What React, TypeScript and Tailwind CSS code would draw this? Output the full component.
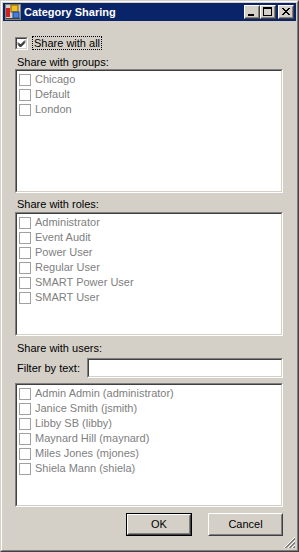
import React from 'react';

const groups = ['Chicago', 'Default', 'London'];
const roles = ['Administrator', 'Event Audit', 'Power User', 'Regular User', 'SMART Power User', 'SMART User'];
const users = [
  'Admin Admin (administrator)',
  'Janice Smith (jsmith)',
  'Libby SB (libby)',
  'Maynard Hill (maynard)',
  'Miles Jones (mjones)',
  'Shiela Mann (shiela)'
];

function Sunken({ className, children }: { className?: string; children?: React.ReactNode }) {
  return (
    <div className={`border border-t-[#808080] border-l-[#808080] border-b-white border-r-white ${className ?? ''}`}>
      <div className="h-full border border-t-[#404040] border-l-[#404040] border-b-[#d4d0c8] border-r-[#d4d0c8] bg-white">
        {children}
      </div>
    </div>
  );
}

function Raised({ className, children }: { className?: string; children?: React.ReactNode }) {
  return (
    <div className={`border border-t-white border-l-white border-b-[#404040] border-r-[#404040] bg-[#d4d0c8] ${className ?? ''}`}>
      <div className="flex h-full items-center justify-center border border-t-[#d4d0c8] border-l-[#d4d0c8] border-b-[#808080] border-r-[#808080]">
        {children}
      </div>
    </div>
  );
}

function ListBox({ items, className }: { items: string[]; className: string }) {
  return (
    <Sunken className={`w-[268px] ${className}`}>
      <div className="flex flex-col pt-[1px]">
        {items.map((item) => (
          <div key={item} className="flex h-[15px] items-center pl-[2px]">
            <div className="h-[12px] w-[12px] border border-[#a0a0a0] bg-white" />
            <span className="ml-[4px] text-[#808080]">{item}</span>
          </div>
        ))}
      </div>
    </Sunken>
  );
}

function AppIcon() {
  return (
    <svg width="16" height="16" viewBox="0 0 16 16">
      <rect x="0.5" y="0.5" width="15" height="15" fill="#d4d0c8" stroke="#808080" />
      <rect x="1" y="4" width="4" height="9" fill="#d02020" />
      <rect x="6" y="1" width="7" height="7" fill="#f0c020" stroke="#806000" />
      <rect x="8" y="8" width="6" height="6" fill="#4080e0" stroke="#204080" />
      <line x1="1" y1="14.5" x2="15" y2="14.5" stroke="#404040" />
    </svg>
  );
}

function CaptionButton({ kind }: { kind: 'min' | 'max' | 'close' }) {
  return (
    <Raised className="h-[14px] w-[16px]">
      <svg width="12" height="10" viewBox="0 0 12 10">
        {kind === 'min' && <rect x="2" y="7" width="6" height="2" fill="#000" />}
        {kind === 'max' && (
          <>
            <rect x="1.5" y="0.5" width="8" height="8" fill="none" stroke="#000" />
            <line x1="1" y1="1.5" x2="10" y2="1.5" stroke="#000" />
          </>
        )}
        {kind === 'close' && (
          <path d="M2 1 L9 8 M3 1 L10 8 M9 1 L2 8 M10 1 L3 8" stroke="#000" strokeWidth="1" />
        )}
      </svg>
    </Raised>
  );
}

export default function App() {
  return (
    <div
      className="h-[552px] w-[299px] border border-t-[#d4d0c8] border-l-[#d4d0c8] border-b-[#404040] border-r-[#404040] bg-[#d4d0c8] text-[11px] leading-[13px] text-black"
      style={{ fontFamily: '"Liberation Sans", Arial, sans-serif' }}
    >
      <div className="flex h-full flex-col border border-t-white border-l-white border-b-[#808080] border-r-[#808080] p-[1px]">
        {/* title bar */}
        <div className="flex h-[18px] shrink-0 items-center bg-[#0a246a] pl-[2px] pr-[2px]">
          <AppIcon />
          <span className="ml-[3px] text-[11px] font-bold text-white">Category Sharing</span>
          <div className="ml-auto flex items-center">
            <CaptionButton kind="min" />
            <CaptionButton kind="max" />
            <div className="w-[2px]" />
            <CaptionButton kind="close" />
          </div>
        </div>

        <div className="flex flex-1 flex-col pl-[12px]">
          {/* share with all */}
          <div className="mt-[15px] flex items-center">
            <Sunken className="h-[13px] w-[13px]">
              <svg width="9" height="9" viewBox="0 0 9 9">
                <path d="M1 3.5 L3.5 6 L8 1.5 M1 4.5 L3.5 7 L8 2.5 M1 5.5 L3.5 8 L8 3.5" stroke="#000" fill="none" />
              </svg>
            </Sunken>
            <span className="ml-[4px] border border-dotted border-black px-[1px] leading-[12px]">Share with all</span>
          </div>

          <div className="mt-[6px] pl-[2px]">Share with groups:</div>
          <ListBox items={groups} className="h-[124px]" />

          <div className="mt-[5px] pl-[2px]">Share with roles:</div>
          <ListBox items={roles} className="mt-[1px] h-[124px]" />

          <div className="mt-[6px] pl-[2px]">Share with users:</div>
          <div className="mt-[3px] flex w-[268px] items-center">
            <span className="pl-[2px]">Filter by text:</span>
            <Sunken className="ml-auto h-[20px] w-[196px]" />
          </div>
          <ListBox items={users} className="mt-[5px] h-[124px]" />

          {/* buttons */}
          <div className="mt-[6px] flex w-[268px] justify-end">
            <div className="h-[23px] w-[66px] border border-black">
              <Raised className="h-full w-full">OK</Raised>
            </div>
            <Raised className="ml-[16px] h-[23px] w-[75px]">Cancel</Raised>
          </div>

          <div className="mt-auto flex justify-end">
            <svg width="12" height="12" viewBox="0 0 12 12">
              <path d="M11 1 L1 11 M11 5 L5 11 M11 9 L9 11" stroke="#808080" strokeWidth="1" />
              <path d="M11 2 L2 11 M11 6 L6 11 M11 10 L10 11" stroke="#808080" strokeWidth="1" />
              <path d="M11 0 L0 11 M11 4 L4 11 M11 8 L8 11" stroke="#ffffff" strokeWidth="1" />
            </svg>
          </div>
        </div>
      </div>
    </div>
  );
}
